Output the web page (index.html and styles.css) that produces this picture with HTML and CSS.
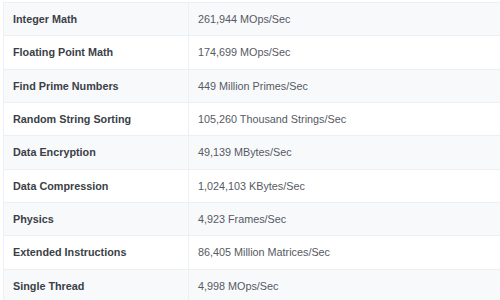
FILE: index.html
```html
<!DOCTYPE html>
<html>
<head>
<meta charset="utf-8">
<link rel="stylesheet" href="styles.css">
</head>
<body>
<table class="bench">
  <tbody>
    <tr><th>Integer Math</th><td>261,944 MOps/Sec</td></tr>
    <tr><th>Floating Point Math</th><td>174,699 MOps/Sec</td></tr>
    <tr><th>Find Prime Numbers</th><td>449 Million Primes/Sec</td></tr>
    <tr><th>Random String Sorting</th><td>105,260 Thousand Strings/Sec</td></tr>
    <tr><th>Data Encryption</th><td>49,139 MBytes/Sec</td></tr>
    <tr><th>Data Compression</th><td>1,024,103 KBytes/Sec</td></tr>
    <tr><th>Physics</th><td>4,923 Frames/Sec</td></tr>
    <tr><th>Extended Instructions</th><td>86,405 Million Matrices/Sec</td></tr>
    <tr><th>Single Thread</th><td>4,998 MOps/Sec</td></tr>
  </tbody>
</table>
</body>
</html>
```
FILE: styles.css
```css
html, body {
  margin: 0;
  padding: 0;
  background: #ffffff;
}
body {
  padding: 2px 0 0 3px;
  overflow: hidden;
}
.bench {
  border-collapse: collapse;
  width: 498px;
  font-family: "Liberation Sans", Arial, sans-serif;
  font-size: 10.8px;
}
.bench tr {
  height: 33.33px;
}
.bench tr:nth-child(odd) {
  background: #f8f9fb;
}
.bench th,
.bench td {
  border: 1px solid #edf0f3;
  padding: 0 9px;
  text-align: left;
  vertical-align: middle;
}
.bench th {
  width: 166px;
  font-weight: bold;
  color: #3b3f47;
}
.bench td {
  color: #555a63;
}
```
